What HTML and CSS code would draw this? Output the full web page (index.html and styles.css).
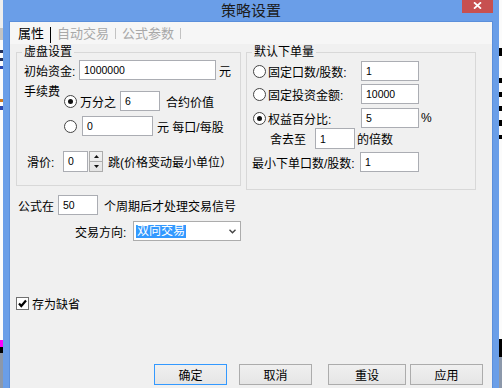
FILE: index.html
```html
<!DOCTYPE html>
<html>
<head>
<meta charset="utf-8">
<link rel="stylesheet" href="styles.css">
</head>
<body>
<div class="desk">
  <div class="strip strip-l">
    <div class="s-blk lg h28"></div>
    <div class="s-blk gbox h12"></div>
    <div class="s-blk wh h10"></div>
    <div class="s-blk dk h3"></div>
    <div class="s-blk wh h5"></div>
    <div class="s-blk dk h3"></div>
    <div class="s-blk wh h5"></div>
    <div class="s-blk bl h3"></div>
    <div class="s-blk wh h30"></div>
    <div class="s-blk or h3"></div>
    <div class="s-blk wh h4"></div>
    <div class="s-blk bl h4"></div>
    <div class="s-blk wh fill"></div>
    <div class="s-blk mg h7"></div>
    <div class="s-blk bk h6"></div>
    <div class="s-blk gy h35"></div>
  </div>

  <div class="window">
    <div class="titlebar">
      <div class="tb-side"></div>
      <div class="title">策略设置</div>
      <div class="tb-side tb-right">
        <div class="close">
          <svg width="9" height="7" viewBox="0 0 9 7"><path d="M1 0.3 L8 6.7 M8 0.3 L1 6.7" stroke="#fff" stroke-width="1.7" fill="none"/></svg>
        </div>
      </div>
    </div>

    <div class="client">
      <div class="tabs">
        <span class="tab active">属性</span><span class="sep on"></span><span class="tab">自动交易</span><span class="sep"></span><span class="tab">公式参数</span><span class="sep"></span>
      </div>

      <div class="main">
        <div class="groups">
          <div class="group g-left">
            <span class="cap">虚盘设置</span>
            <div class="row r-init">
              <span class="lbl w55">初始资金:</span>
              <span class="tb w137">1000000</span>
              <span class="ml3">元</span>
            </div>
            <div class="fee">
              <span class="fee-label">手续费</span>
              <div class="fee-col">
                <div class="row h20">
                  <span class="radio on"><span class="dot"></span></span>
                  <span class="ml3">万分之</span>
                  <span class="tb w40 ml4">6</span>
                  <span class="ml6">合约价值</span>
                </div>
                <div class="row h20 mt5">
                  <span class="radio"></span>
                  <span class="tb w71 ml5">0</span>
                  <span class="ml4">元 每口/每股</span>
                </div>
              </div>
            </div>
            <div class="row r-slip">
              <span class="lbl slip-lbl">滑价:</span>
              <span class="tb w25 h21">0</span>
              <span class="spin">
                <span class="spin-btn"><svg width="5" height="3" viewBox="0 0 5 3"><path d="M0 3 L2.5 0 L5 3 Z" fill="#111"/></svg></span>
                <span class="spin-btn"><svg width="5" height="3" viewBox="0 0 5 3"><path d="M0 0 L2.5 3 L5 0 Z" fill="#111"/></svg></span>
              </span>
              <span class="ml5">跳(价格变动最小单位）</span>
            </div>
          </div>

          <div class="group g-right">
            <span class="cap">默认下单量</span>
            <div class="row rr h20 mt1">
              <span class="radio"></span>
              <span class="lbl rlbl">固定口数/股数:</span>
              <span class="tb w58">1</span>
            </div>
            <div class="row rr h20 mt3">
              <span class="radio"></span>
              <span class="lbl rlbl">固定投资金额:</span>
              <span class="tb w58">10000</span>
            </div>
            <div class="row rr h20 mt4">
              <span class="radio on"><span class="dot"></span></span>
              <span class="lbl rlbl">权益百分比:</span>
              <span class="tb w58">5</span>
              <span class="ml2">%</span>
            </div>
            <div class="row r-round">
              <span>舍去至</span>
              <span class="tb w40 h21 ml9">1</span>
              <span class="ml2">的倍数</span>
            </div>
            <div class="row r-min">
              <span class="lbl w108">最小下单口数/股数:</span>
              <span class="tb w59">1</span>
            </div>
          </div>
        </div>

        <div class="row formula">
          <span>公式在</span>
          <span class="tb w40 ml4">50</span>
          <span class="ml6">个周期后才处理交易信号</span>
        </div>

        <div class="row dir">
          <span class="lbl w58">交易方向:</span>
          <span class="combo">
            <span class="hl">双向交易</span>
            <svg class="chev" width="7" height="5" viewBox="0 0 7 5"><path d="M0.5 0.8 L3.5 3.8 L6.5 0.8" stroke="#444" stroke-width="1.4" fill="none"/></svg>
          </span>
        </div>

        <div class="row save">
          <span class="chk"><svg width="11" height="11" viewBox="0 0 11 11"><path d="M2 5.5 L4.3 8 L9 2.5" stroke="#000" stroke-width="2.2" fill="none"/></svg></span>
          <span class="ml3">存为缺省</span>
        </div>

        <div class="row buttons">
          <span class="btn def b1">确定</span>
          <span class="btn b2">取消</span>
          <span class="btn b3">重设</span>
          <span class="btn b4">应用</span>
        </div>
      </div>
    </div>
  </div>

  <div class="strip strip-r">
    <div class="s-blk wh h48"></div>
    <div class="s-blk bk h8"></div>
    <div class="s-blk wh h22"></div>
    <div class="s-blk bk h5"></div>
    <div class="s-blk wh h9"></div>
    <div class="s-blk bk h5"></div>
    <div class="s-blk wh h9"></div>
    <div class="s-blk bk h5"></div>
    <div class="s-blk wh h9"></div>
    <div class="s-blk bk h6"></div>
    <div class="s-blk wh h9"></div>
    <div class="s-blk bk h4"></div>
    <div class="s-blk wh fill"></div>
    <div class="s-blk bk h18"></div>
    <div class="s-blk gy h31"></div>
  </div>
</div>
</body>
</html>
```

FILE: styles.css
```css
* { box-sizing: border-box; }
html, body { margin: 0; padding: 0; }
body {
  width: 502px;
  height: 388px;
  overflow: hidden;
  font-family: "Liberation Sans", "Noto Sans CJK SC", sans-serif;
  font-size: 12px;
  color: #000;
  background: #f0f0f0;
}
.desk { display: flex; height: 388px; }

/* background strips */
.strip { width: 3px; display: flex; flex-direction: column; background: #fbfbfb; }
.s-blk { flex: none; }
.s-blk.fill { flex: 1; }
.lg { background: #eeeeee; }
.gbox { background: #c4c4c4; }
.wh { background: #fbfbfb; }
.dk { background: #24305a; }
.bl { background: #2a48b0; }
.or { background: #d07a20; }
.mg { background: #ff00ff; }
.bk { background: #000; }
.gy { background: #8c98aa; }
.h3 { height: 3px; } .h4 { height: 4px; } .h5 { height: 5px; } .h6 { height: 6px; }
.h7 { height: 7px; } .h8 { height: 8px; } .h9 { height: 9px; } .h10 { height: 10px; }
.h12 { height: 12px; } .h18 { height: 18px; } .h22 { height: 22px; } .h28 { height: 28px; }
.h30 { height: 30px; } .h31 { height: 31px; } .h35 { height: 35px; } .h48 { height: 48px; }

/* window */
.window {
  width: 496px;
  background: #6a9ee8;
  padding: 0 6px;
  display: flex;
  flex-direction: column;
}
.titlebar {
  height: 21px;
  flex: none;
  display: grid;
  grid-template-columns: 1fr auto 1fr;
}
.title {
  font-family: "Noto Sans CJK SC", sans-serif;
  font-size: 15px;
  line-height: 20px;
  color: #1c1c1c;
}
.tb-right { display: flex; justify-content: flex-end; }
.close {
  width: 31px;
  height: 13px;
  background: #c75050;
  display: flex;
  align-items: center;
  justify-content: center;
  padding-bottom: 2px;
}
.close svg { display: block; }

.client {
  flex: 1;
  background: #f0f0f0;
  border: 1px solid #5b8fdb;
  border-bottom: 0;
}

/* tabs */
.tabs {
  height: 22px;
  background: #f6f6f6;
  display: flex;
  align-items: center;
  padding-left: 8px;
  font-family: "Noto Sans CJK SC", sans-serif;
  font-size: 13px;
}
.tab { color: #a8a8a8; line-height: 16px; }
.tab.active { color: #000; }
.sep { width: 1px; height: 11px; background: #c2c2c2; margin: 0 6px; }
.sep.on { height: 16px; background: #000; align-self: flex-end; margin-bottom: 1px; }

/* main */
.main { padding: 8px 0 0 6px; }
.groups { display: flex; gap: 5px; align-items: flex-start; height: 138px; }
.group { border: 1px solid #d8d8d8; }
.g-left { width: 225px; height: 134px; }
.g-right { width: 230px; height: 138px; }
.cap {
  display: block;
  width: max-content;
  margin: -8px 0 0 5px;
  padding: 0 2px;
  background: #f0f0f0;
  line-height: 15px;
}

.row { display: flex; align-items: center; white-space: nowrap; }
.h20 { height: 20px; }
.lbl { flex: none; }
.w55 { width: 55px; }
.w58 { width: 58px; }
.w108 { width: 108px; }

.ml2 { margin-left: 2px; } .ml3 { margin-left: 3px; } .ml4 { margin-left: 4px; }
.ml5 { margin-left: 5px; } .ml6 { margin-left: 6px; } .ml9 { margin-left: 9px; }
.mt1 { margin-top: 1px; } .mt3 { margin-top: 3px; } .mt4 { margin-top: 4px; } .mt5 { margin-top: 5px; }

/* text boxes */
.tb {
  flex: none;
  display: flex;
  align-items: center;
  height: 20px;
  border: 1px solid #abadb3;
  background: #fff;
  padding-left: 4px;
  font-family: "Liberation Sans", sans-serif;
  font-size: 10.5px;
}
.tb.h21 { height: 21px; }
.w25 { width: 25px; } .w40 { width: 40px; } .w59 { width: 59px; }
.w71 { width: 71px; } .w137 { width: 137px; }
.tb.w58 { width: 58px; }

/* left group rows */
.r-init { height: 20px; padding-left: 7px; }
.fee { display: flex; margin-top: 5px; }
.fee-label { width: 47px; padding-left: 7px; line-height: 14px; flex: none; }
.fee-col { padding-top: 6px; }
.r-slip { margin-top: 14px; height: 22px; }
.slip-lbl { width: 46px; padding-left: 10px; }

.radio {
  flex: none;
  width: 13px;
  height: 13px;
  border-radius: 50%;
  border: 1px solid #444;
  background: #fff;
  display: flex;
  align-items: center;
  justify-content: center;
}
.radio .dot { width: 5px; height: 5px; border-radius: 50%; background: #111; }

.spin {
  flex: none;
  margin-left: 1px;
  width: 14px;
  height: 21px;
  border: 1px solid #acacac;
  display: flex;
  flex-direction: column;
  background: linear-gradient(#f2f2f2, #e4e4e4);
}
.spin-btn {
  flex: 1;
  display: flex;
  align-items: center;
  justify-content: center;
}
.spin-btn + .spin-btn { border-top: 1px solid #acacac; }
.spin svg { display: block; }

/* right group rows */
.rr { padding-left: 6px; }
.rlbl { width: 95px; padding-left: 2px; }
.r-round { height: 21px; padding-left: 23px; }
.r-min { height: 20px; margin-top: 3px; padding-left: 5px; }

/* below */
.formula { margin-top: 5px; height: 20px; padding-left: 2px; }
.dir { margin-top: 6px; height: 20px; padding-left: 59px; }
.combo {
  width: 108px;
  height: 20px;
  border: 1px solid #acacac;
  background: #fff;
  display: flex;
  align-items: center;
  padding-left: 2px;
}
.hl {
  background: #3399ff;
  color: #fff;
  height: 13px;
  line-height: 13px;
  padding: 0 1px;
}
.chev { margin-left: auto; margin-right: 4px; display: block; }

.save { margin-top: 56px; height: 13px; }
.chk {
  flex: none;
  width: 13px;
  height: 13px;
  border: 1px solid #707070;
  background: #fff;
  display: flex;
  align-items: center;
  justify-content: center;
}
.chk svg { display: block; }

.buttons { margin-top: 54px; height: 21px; }
.btn {
  flex: none;
  height: 21px;
  width: 73px;
  border: 1px solid #acacac;
  background: linear-gradient(#f0f0f0, #e5e5e5);
  display: flex;
  align-items: center;
  justify-content: center;
}
.btn.def { border-color: #3399ff; }
.b1 { margin-left: 138px; }
.b2 { margin-left: 12px; }
.b3 { margin-left: 16px; width: 78px; }
.b4 { margin-left: 4px; }
```
